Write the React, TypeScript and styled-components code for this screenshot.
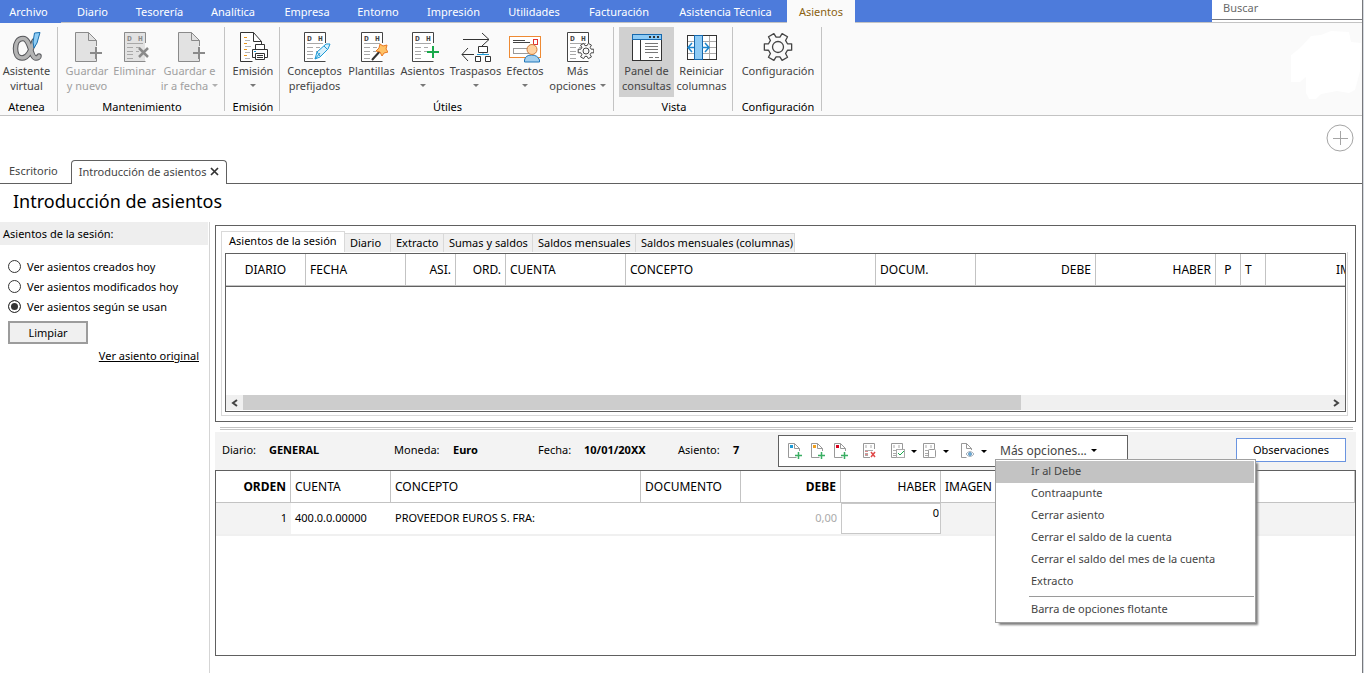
import React from "react";
import styled, { createGlobalStyle, css } from "styled-components";

const GlobalStyle = createGlobalStyle`
  * { box-sizing: border-box; }
  body {
    margin: 0;
    background: #fff;
    color: #000;
    font-family: "Noto Sans", "Open Sans", sans-serif;
    font-size: 11px;
    line-height: 15px;
  }
  button, input { font: inherit; color: inherit; }
  button { cursor: pointer; }
`;

const plainButton = css`
  border: 0;
  padding: 0;
  background: none;
`;

/* ---------- Window and top menu ---------- */

const Window = styled.div`
  display: flex;
  flex-direction: column;
  min-height: 100vh;
  margin-right: 1px;
  border-right: 1px solid #77787c;
  box-shadow: 1px 0 0 #d5dae0;
`;

const MenuBar = styled.nav`
  display: flex;
  height: 23px;
  background: #4d7bdb;
  border-bottom: 1px solid #c3c3c3;
`;

const MenuTab = styled.button<{ $width: number; $active?: boolean; $file?: boolean }>`
  ${plainButton}
  width: ${(p) => p.$width}px;
  height: 22px;
  flex: none;
  white-space: nowrap;
  color: #fff;
  ${(p) => p.$file && css`height: 23px; padding-right: 4px; background: #4d7bdb;`}
  ${(p) => p.$active && css`height: 23px; background: #fafafa; color: #8a6212;`}
`;

const Search = styled.label`
  width: 150px;
  margin-left: auto;
  background: #fff;
  input {
    display: block;
    width: 100%;
    height: 20px;
    padding: 0 11px 4px;
    border: 0;
    border-bottom: 1px solid #77787c;
    outline: 0;
    background: #fff;
  }
  input::placeholder { color: #6a6a6a; opacity: 1; }
`;

/* ---------- Ribbon ---------- */

const Ribbon = styled.section`
  display: flex;
  height: 93px;
  background: #fafafa;
  border-bottom: 1px solid #c3c3c3;
`;

const Group = styled.div`
  display: flex;
  flex-direction: column;
  align-items: center;
  justify-content: space-between;
  flex: none;
  height: 84px;
  margin-top: 4px;
  padding: 0 3px 0 5px;
  border-right: 1px solid #c3c3c3;
  &:first-child { padding: 0 4px 0 0; }
`;

const GroupTools = styled.div`
  display: flex;
`;

const GroupName = styled.div`
  line-height: 8px;
`;

const Tool = styled.button<{ $width: number; $pressed?: boolean }>`
  ${plainButton}
  display: flex;
  flex-direction: column;
  align-items: center;
  width: ${(p) => p.$width}px;
  height: 70px;
  padding-top: 4px;
  color: #444;
  white-space: nowrap;
  background: ${(p) => (p.$pressed ? "#d0d0d0" : "none")};
  &:disabled { color: #a0a0a0; cursor: default; }
  svg { flex: none; }
`;

const ToolLine = styled.span`
  display: flex;
  align-items: center;
  gap: 4px;
  height: 15px;
`;

const Caret = styled.i<{ $color?: string }>`
  border: 3px solid transparent;
  border-top-color: ${(p) => p.$color || "#777"};
  border-bottom: 0;
  button:disabled & { border-top-color: #b0b0b0; }
`;

const Cloud = styled.svg`
  margin: 8px 1px 0 auto;
`;

/* ---------- Document tabs ---------- */

const DocumentTabs = styled.div`
  display: flex;
  align-items: flex-end;
  height: 68px;
  border-bottom: 1px solid #606060;
`;

const DocumentTab = styled.button<{ $active?: boolean }>`
  ${plainButton}
  display: flex;
  align-items: center;
  gap: 4px;
  height: 24px;
  padding: 0 13px 1px 9px;
  color: #444;
  ${(p) =>
    p.$active &&
    css`
      margin-bottom: -1px;
      padding: 0 7px 2px;
      background: #fff;
      border: 1px solid #606060;
      border-bottom: 0;
      border-radius: 4px 4px 0 0;
    `}
`;

const AddButton = styled.button`
  ${plainButton}
  align-self: flex-start;
  height: 28px;
  margin: 8px 8px 0 auto;
`;

const Title = styled.h1`
  margin: 0;
  padding: 4px 13px 8px;
  font-size: 18px;
  font-weight: 400;
  line-height: 26px;
`;

/* ---------- Sidebar ---------- */

const Body = styled.div`
  display: flex;
  flex: 1;
`;

const Sidebar = styled.aside`
  flex: none;
  width: 210px;
  padding-right: 1px;
  border-right: 1px solid #d5d5d5;
`;

const SideHeading = styled.div`
  padding: 4px 3px;
  background: #eee;
`;

const Options = styled.div`
  display: flex;
  flex-direction: column;
  margin-top: 11px;
  padding-left: 8px;
`;

const Option = styled.label`
  display: flex;
  align-items: center;
  gap: 6px;
  height: 20px;
  input {
    appearance: none;
    width: 13px;
    height: 13px;
    margin: 0;
    border: 1px solid #333;
    border-radius: 50%;
    background: #fff;
  }
  input:checked {
    background: #333;
    box-shadow: inset 0 0 0 2px #fff;
  }
`;

const ClearButton = styled.button`
  display: block;
  width: 80px;
  height: 23px;
  margin: 5px 0 0 8px;
  padding: 0;
  border: 2px solid #9c9c9c;
  background: #f0f0f0;
`;

const OriginalLink = styled.a`
  display: block;
  margin: 4px 9px 0;
  text-align: right;
  color: #000;
`;

/* ---------- Session panel ---------- */

const Workspace = styled.main`
  flex: 1;
  min-width: 0;
  padding: 3px 6px 17px 5px;
`;

const SessionPanel = styled.section`
  padding: 5px 7px 5px 5px;
  border: 1px solid #606060;
`;

const SessionTabs = styled.div`
  display: flex;
  align-items: flex-end;
  height: 21px;
`;

const SessionTab = styled.button<{ $width: number; $active?: boolean }>`
  flex: none;
  width: ${(p) => p.$width}px;
  height: 19px;
  padding: 0 0 1px 5px;
  text-align: left;
  white-space: nowrap;
  border: 1px solid #d9d9d9;
  border-left: 0;
  border-bottom: 0;
  background: #f0f0f0;
  ${(p) =>
    p.$active &&
    css`
      height: 21px;
      padding: 0 0 4px 7px;
      border-left: 1px solid #d9d9d9;
      background: #fff;
    `}
`;

const SessionFrame = styled.div`
  padding: 1px 1px 3px 3px;
  border: 1px solid #d9d9d9;
  border-top: 0;
`;

const GridBox = styled.div`
  display: flex;
  flex-direction: column;
  height: 159px;
  overflow: hidden;
  border: 1px solid #606060;
`;

const Grid = styled.table`
  table-layout: fixed;
  border-collapse: separate;
  border-spacing: 0;
  width: 100%;
`;

const HeadCell = styled.th<{ $align?: string; $bold?: boolean; $indent?: number; $last?: boolean }>`
  height: 32px;
  padding: 0 4px;
  padding-left: ${(p) => p.$indent ?? 4}px;
  overflow: hidden;
  font-weight: ${(p) => (p.$bold ? 700 : 400)};
  font-size: 12px;
  text-align: ${(p) => p.$align || "left"};
  white-space: nowrap;
  border-right: ${(p) => (p.$last ? 0 : 1)}px solid #c3c3c3;
  border-bottom: 1px solid #c3c3c3;
`;

const GridRule = styled.div`
  flex: 1;
  border-top: 1px solid #606060;
`;

const ScrollBar = styled.div`
  display: flex;
  height: 16px;
  padding-bottom: 1px;
  background: #f0f0f0;
  background-clip: content-box;
`;

const ScrollArrow = styled.button`
  ${plainButton}
  display: flex;
  align-items: center;
  justify-content: center;
  width: 17px;
`;

const ScrollTrack = styled.div`
  flex: 1;
`;

const ScrollThumb = styled.div`
  width: calc(72% - 3px);
  height: 100%;
  background: #cdcdcd;
`;

const Splitter = styled.div`
  height: 3px;
  margin: 5px 3px 2px 5px;
  border: 1px solid #c3c3c3;
  border-width: 1px 0;
`;

/* ---------- Entry panel ---------- */

const EntryBar = styled.header`
  display: flex;
  align-items: center;
  height: 38px;
  padding: 0 10px 0 7px;
  background: #f3f3f3;
`;

const Field = styled.div<{ $width: number; $label: number }>`
  display: grid;
  grid-template-columns: ${(p) => p.$label}px auto;
  justify-content: start;
  flex: none;
  width: ${(p) => p.$width}px;
  padding-bottom: 4px;
  white-space: nowrap;
`;

const Toolbar = styled.div`
  display: flex;
  align-items: center;
  flex: none;
  width: 350px;
  height: 32px;
  padding-left: 8px;
  border: 1px solid #606060;
  background: #fff;
`;

const IconButton = styled.button<{ $width: number }>`
  ${plainButton}
  display: flex;
  align-items: center;
  gap: 5px;
  flex: none;
  width: ${(p) => p.$width}px;
`;

const MoreWrap = styled.div`
  position: relative;
`;

const MoreButton = styled.button`
  ${plainButton}
  display: flex;
  align-items: center;
  gap: 4px;
  padding: 0 0 2px 5px;
  color: #444;
  font-size: 12px;
`;

const Menu = styled.ul`
  position: absolute;
  z-index: 2;
  top: 16px;
  left: 0;
  width: 261px;
  margin: 0;
  padding: 1px 1px 1px 0;
  list-style: none;
  border: 1px solid #a0a0a0;
  background: #fff;
  box-shadow: 3px 3px 2px -1px #808080;
`;

const MenuItem = styled.button<{ $active?: boolean }>`
  ${plainButton}
  display: block;
  width: 100%;
  height: 22px;
  padding: 0 0 2px 35px;
  text-align: left;
  color: #444;
  white-space: nowrap;
  background: ${(p) => (p.$active ? "#c3c3c3" : "none")};
`;

const MenuRule = styled.li`
  margin: 3px 0 2px 33px;
  border-top: 1px solid #9a9a9a;
`;

const NotesButton = styled.button`
  width: 110px;
  height: 24px;
  margin: 0 0 2px auto;
  padding: 0 0 1px;
  border: 1px solid #6a94e0;
  background: #fff;
`;

const EntryGrid = styled.section`
  height: 186px;
  border: 1px solid #606060;
`;

const BodyCell = styled.td<{ $align?: string; $shaded?: boolean; $muted?: boolean }>`
  height: 33px;
  padding: 0 4px 2px;
  font-size: 11px;
  text-align: ${(p) => p.$align || "left"};
  white-space: nowrap;
  color: ${(p) => (p.$muted ? "#aaa" : "#000")};
  background: ${(p) => (p.$shaded ? "#f3f3f3" : "#fff")};
  border-bottom: 2px solid #f0f0f0;
`;

const EditCell = styled.td`
  height: 33px;
  padding: 0;
  border-bottom: 2px solid #f0f0f0;
  input {
    display: block;
    width: 100%;
    height: 31px;
    padding: 0 1px 12px;
    text-align: right;
    border: 1px solid #c8c8c8;
    border-radius: 0;
    outline: 0;
  }
`;

/* ---------- Icons ---------- */

const Icon = ({ children, w = 32, h = 32 }: { children: React.ReactNode; w?: number; h?: number }) => (
  <svg width={w} height={h} viewBox={`0 0 ${w} ${h}`} fill="none" stroke="#444" aria-hidden="true">
    {children}
  </svg>
);

const gearPath = (cx: number, cy: number, outer: number, inner: number) => {
  const points: string[] = [];
  for (let i = 0; i < 6; i++) {
    [[-19, inner], [-13, outer], [13, outer], [19, inner]].forEach(([offset, r]) => {
      const a = ((i * 60 + offset) * Math.PI) / 180;
      points.push(`${(cx + r * Math.cos(a)).toFixed(2)} ${(cy + r * Math.sin(a)).toFixed(2)}`);
    });
  }
  return `M${points.join("L")}Z`;
};

const AssistantIcon = () => (
  <Icon>
    <g strokeLinecap="round">
      <path d="M23 10C20 20 17 27 11 27 6.500 27 4.500 23 4.500 17.500S7 7.500 12 7.500C20 7.500 19 27 25 27 27 27 28 26 28 25" stroke="#55565a" strokeWidth="5.500" />
      <path d="M23 10C20 20 17 27 11 27 6.500 27 4.500 23 4.500 17.500S7 7.500 12 7.500C20 7.500 19 27 25 27 27 27 28 26 28 25" stroke="#b4b4b4" strokeWidth="3.500" />
    </g>
    <path d="M23.500 2L29 1.500 26 12l-3 5-1-6z" fill="#8fcdf5" stroke="#1a6fae" />
  </Icon>
);

const NewPageIcon = () => (
  <Icon>
    <path d="M4.500 1.500h13l8 8v21h-21z" fill="#e2e2e2" stroke="none" />
    <path d="M25.500 15V9.500l-8-8h-13v29h21V27M17.500 1.500v8h8" stroke="#8a8a8a" />
    <path d="M25 16v12M19 22h12" stroke="#8a8a8a" strokeWidth="2" />
  </Icon>
);

const Ledger = ({ muted, children }: { muted?: boolean; children: React.ReactNode }) => (
  <Icon>
    {muted && <path d="M5 1h21v30H5z" fill="#e2e2e2" stroke="none" />}
    <path d="M26.500 12V1.500h-21v29h21" fill={muted ? "none" : "#fff"} stroke={muted ? "#8a8a8a" : "#444"} />
    <g fill={muted ? "#8a8a8a" : "#444"} stroke="none" fontFamily="Liberation Mono, monospace" fontWeight="700" fontSize="8">
      <text x="8" y="10">D</text>
      <text x="19" y="10">H</text>
    </g>
    <path d="M8 12.500h16M8 16.500h6M8 20.500h6M8 23.500h6M8 27.500h6M17 16.500h4M17 20.500h3" stroke="#a8a8a8" />
    {children}
  </Icon>
);

const DeleteIcon = () => (
  <Ledger muted>
    <path d="M20 17l9 9M29 17l-9 9" stroke="#8a8a8a" strokeWidth="2.500" />
  </Ledger>
);

const PrintIcon = () => (
  <Icon>
    <path d="M24.500 13V10.500l-8-9h-13v29h12M16.500 1.500v9h8" fill="#fff" stroke="#333" />
    <path d="M7 6.500h3M7 12.500h3M7 18.500h3M7 24.500h3" stroke="#e8951c" />
    <path d="M8 9.500h5M8 15.500h6M8 21.500h5M8 27.500h5" stroke="#b5b5b5" />
    <path d="M18.500 18.500v-5h9v5M18.500 26.500h-3v-8h15v8h-3" fill="#fff" stroke="#333" />
    <path d="M18.500 22.500h9v6h-9zM20 24.500h6M20 26.500h6" fill="#fff" stroke="#333" />
    <path d="M17 20.500h2" stroke="#1c9ad6" />
  </Icon>
);

const PenIcon = () => (
  <Ledger>
    <path d="M16 28l2-7 9-8h4l-2 5-8 8zM18 21l3 4M25 15l3 3M16 28l5-6" fill="#d8f0fc" stroke="#1c9ad6" />
  </Ledger>
);

const WandIcon = () => (
  <Ledger>
    <path d="M16 29l9-10" stroke="#333" strokeWidth="2" />
    <path d="M24 13l3 2 4-1-1 4 2 3-4 1-2 3-2-4-4-1 3-3z" fill="#ffc266" stroke="#e97822" />
  </Ledger>
);

const AddEntryIcon = () => (
  <Ledger>
    <path d="M26 15v12M20 21h12" stroke="#19a94b" strokeWidth="2" />
  </Ledger>
);

const GearLedgerIcon = () => (
  <Ledger>
    <path d={gearPath(24, 20, 8, 5.5)} fill="#fafafa" />
    <circle cx="24" cy="20" r="3" />
  </Ledger>
);

const TransferIcon = () => (
  <Icon>
    <path d="M3 8.500h26M22 2l7 6.500-7 6.500M14 23.500H2M8 17l-6 6.500 6 6.500" stroke="#333" />
    <path d="M18.500 15.500h9v6h-9zM15.500 25.500h5v5h-5zM25.500 25.500h5v5h-5z" fill="#fff" stroke="#333" />
    <path d="M17 23.500h12M23 22v2" stroke="#1c9ad6" />
  </Icon>
);

const BillIcon = () => (
  <Icon>
    <rect x=".5" y="5.500" width="31" height="21" fill="#fff" stroke="#ee8a33" />
    <path d="M4 9.500h12M4 11.500h17" />
    <rect x="4.500" y="17.500" width="15" height="5" stroke="#999" />
    <rect x="24.500" y="8.500" width="4" height="5" stroke="#e23232" />
    <path d="M15.500 31v-2q1-5 7-5t8 5v2z" fill="#a5d0ef" stroke="#2177b8" />
    <circle cx="23" cy="18.500" r="5" fill="#ffd2a1" stroke="#cf7c3a" />
  </Icon>
);

const PanelIcon = () => (
  <Icon>
    <rect x="1.500" y="3.500" width="29" height="26" fill="#fff" stroke="#333" />
    <rect x="1.500" y="3.500" width="29" height="5" fill="#8ecbf5" stroke="#1668ad" />
    <path d="M18 6h2M22 6h2M26 6h2" stroke="#333" strokeWidth="2" />
    <path d="M9.500 9v20" stroke="#333" />
    <path d="M14 12.500h13M14 15.500h13M14 18.500h13M14 21.500h13M18 26.500h4M24 26.500h4" stroke="#777" />
  </Icon>
);

const ColumnsIcon = () => (
  <Icon>
    <rect x="1.500" y="4.500" width="29" height="24" fill="#fff" stroke="#333" />
    <path d="M2 10.500h28M2 16.500h28M2 22.500h28M23.500 5v23" stroke="#aaa" />
    <rect x="8.500" y="4.500" width="8" height="24" fill="#8ecbf5" stroke="#1668ad" />
    <path d="M8 16.500H2M6 12l-4 4.500L6 21M16 16.500h7M19 12l4 4.500-4 4.500" stroke="#1c85cc" strokeWidth="1.500" />
  </Icon>
);

const SettingsIcon = () => (
  <Icon>
    <path d={gearPath(16, 16, 14, 10)} strokeWidth="1.300" strokeLinejoin="round" />
    <circle cx="16" cy="16" r="5.500" strokeWidth="1.300" />
  </Icon>
);

const SmallNewIcon = ({ color }: { color: string }) => (
  <Icon w={16} h={18}>
    <path d="M12.500 9V6.500l-5-5h-6v14h8M7.500 1.500v5h5" stroke="#999" />
    <rect x="3" y="3" width="3" height="3" fill={color} stroke="none" />
    <path d="M11.500 10v7M8 13.500h7" stroke="#3aae63" strokeWidth="1.500" />
  </Icon>
);

const SmallLedgerIcon = ({ kind }: { kind: "delete" | "check" | "page" }) => (
  <Icon w={16} h={18}>
    <path d="M12.500 7V1.500h-11v14H8" stroke="#999" />
    <path d="M4 3v3M9 3v3M3 8.500h8M3 11.500h3M3 13.500h3" stroke="#aaa" />
    {kind === "delete" && (
      <>
        <path d="M3 9.500h3M3 12.500h3" stroke="#e08a8a" />
        <path d="M9 10l4 5M13 10l-4 5" stroke="#e04848" strokeWidth="1.500" />
      </>
    )}
    {kind === "check" && (
      <>
        <rect x="6.500" y="7.500" width="8" height="8" fill="#fff" stroke="#aaa" />
        <path d="M8 11l2 2 4-4" stroke="#19a94b" />
      </>
    )}
    {kind === "page" && <rect x="6.500" y="7.500" width="7" height="8" rx="1" fill="#fff" stroke="#999" />}
  </Icon>
);

const ViewIcon = () => (
  <Icon w={16} h={18}>
    <path d="M11.500 8V6.500l-5-5h-5v14h5M6.500 1.500v5h5" stroke="#999" />
    <path d="M6 12q4-5 8 0-4 5-8 0z" fill="#fff" stroke="#a5b0ba" />
    <circle cx="10" cy="12" r="1.500" fill="#6ab3e0" stroke="#6a9cc2" />
  </Icon>
);

/* ---------- Data ---------- */

const menuTabs: [string, number][] = [
  ["Diario", 63], ["Tesorería", 71], ["Analítica", 76], ["Empresa", 72], ["Entorno", 70],
  ["Impresión", 81], ["Utilidades", 80], ["Facturación", 90], ["Asistencia Técnica", 123],
];

type ToolData = {
  lines: string[];
  width: number;
  icon: React.ReactNode;
  disabled?: boolean;
  pressed?: boolean;
  caret?: "inline" | "below";
};

const groups: { name: string; tools: ToolData[] }[] = [
  { name: "Atenea", tools: [{ lines: ["Asistente", "virtual"], width: 53, icon: <AssistantIcon /> }] },
  {
    name: "Mantenimiento",
    tools: [
      { lines: ["Guardar", "y nuevo"], width: 48, icon: <NewPageIcon />, disabled: true },
      { lines: ["Eliminar"], width: 47, icon: <DeleteIcon />, disabled: true },
      { lines: ["Guardar e", "ir a fecha"], width: 63, icon: <NewPageIcon />, disabled: true, caret: "inline" },
    ],
  },
  { name: "Emisión", tools: [{ lines: ["Emisión"], width: 46, icon: <PrintIcon />, caret: "below" }] },
  {
    name: "Útiles",
    tools: [
      { lines: ["Conceptos", "prefijados"], width: 59, icon: <PenIcon /> },
      { lines: ["Plantillas"], width: 55, icon: <WandIcon /> },
      { lines: ["Asientos"], width: 47, icon: <AddEntryIcon />, caret: "below" },
      { lines: ["Traspasos"], width: 59, icon: <TransferIcon />, caret: "below" },
      { lines: ["Efectos"], width: 40, icon: <BillIcon />, caret: "below" },
      { lines: ["Más", "opciones"], width: 65, icon: <GearLedgerIcon />, caret: "inline" },
    ],
  },
  {
    name: "Vista",
    tools: [
      { lines: ["Panel de", "consultas"], width: 55, icon: <PanelIcon />, pressed: true },
      { lines: ["Reiniciar", "columnas"], width: 55, icon: <ColumnsIcon /> },
    ],
  },
  { name: "Configuración", tools: [{ lines: ["Configuración"], width: 80, icon: <SettingsIcon /> }] },
];

const sessionTabs: [string, number][] = [
  ["Diario", 46], ["Extracto", 53], ["Sumas y saldos", 89], ["Saldos mensuales", 103], ["Saldos mensuales (columnas)", 159],
];

const sessionColumns: [string, number, string?][] = [
  ["DIARIO", 80, "center"], ["FECHA", 100], ["ASI.", 50, "right"], ["ORD.", 50, "right"], ["CUENTA", 120],
  ["CONCEPTO", 250], ["DOCUM.", 100], ["DEBE", 120, "right"], ["HABER", 120, "right"], ["P", 25, "center"], ["T", 25],
];

const menuItems = [
  "Ir al Debe", "Contraapunte", "Cerrar asiento", "Cerrar el saldo de la cuenta",
  "Cerrar el saldo del mes de la cuenta", "Extracto",
];

const RibbonTool = ({ tool }: { tool: ToolData }) => (
  <Tool $width={tool.width} $pressed={tool.pressed} disabled={tool.disabled}>
    {tool.icon}
    {tool.lines.map((line, i) => (
      <ToolLine key={line}>
        {line}
        {tool.caret === "inline" && i === 1 && <Caret />}
      </ToolLine>
    ))}
    {tool.caret === "below" && <ToolLine><Caret /></ToolLine>}
  </Tool>
);

export default function App() {
  return (
    <>
      <GlobalStyle />
      <Window>
        <MenuBar>
          <MenuTab $width={61} $file>Archivo</MenuTab>
          {menuTabs.map(([name, width]) => (
            <MenuTab key={name} $width={width}>{name}</MenuTab>
          ))}
          <MenuTab $width={68} $active>Asientos</MenuTab>
          <Search>
            <input type="text" placeholder="Buscar" aria-label="Buscar" />
          </Search>
        </MenuBar>

        <Ribbon>
          {groups.map((group) => (
            <Group key={group.name}>
              <GroupTools>
                {group.tools.map((tool) => <RibbonTool key={tool.lines.join(" ")} tool={tool} />)}
              </GroupTools>
              <GroupName>{group.name}</GroupName>
            </Group>
          ))}
          <Cloud width="70" height="70" viewBox="0 0 70 70" aria-hidden="true">
            <path d="M0 24L9 17 20 5 30 4 40 0 58 1 60 11 70 12 69 40 64 59 58 62 46 60 30 63 25 68 18 68 15 62V46L9 51H0Z" fill="#fff" />
          </Cloud>
        </Ribbon>

        <DocumentTabs>
          <DocumentTab>Escritorio</DocumentTab>
          <DocumentTab $active>
            Introducción de asientos
            <svg width="9" height="9" viewBox="0 0 9 9" stroke="#333" strokeWidth="1.700" aria-hidden="true">
              <path d="M1 1l7 7M8 1L1 8" />
            </svg>
          </DocumentTab>
          <AddButton aria-label="Añadir">
            <svg width="28" height="28" viewBox="0 0 28 28" fill="none" stroke="#a5a5a5" aria-hidden="true">
              <circle cx="14" cy="14" r="13" />
              <path d="M14.500 7v14M7 14.500h15" />
            </svg>
          </AddButton>
        </DocumentTabs>

        <Title>Introducción de asientos</Title>

        <Body>
          <Sidebar>
            <SideHeading>Asientos de la sesión:</SideHeading>
            <Options>
              <Option><input type="radio" name="filtro" />Ver asientos creados hoy</Option>
              <Option><input type="radio" name="filtro" />Ver asientos modificados hoy</Option>
              <Option><input type="radio" name="filtro" defaultChecked />Ver asientos según se usan</Option>
            </Options>
            <ClearButton>Limpiar</ClearButton>
            <OriginalLink href="#original">Ver asiento original</OriginalLink>
          </Sidebar>

          <Workspace>
            <SessionPanel>
              <SessionTabs>
                <SessionTab $width={124} $active>Asientos de la sesión</SessionTab>
                {sessionTabs.map(([name, width]) => (
                  <SessionTab key={name} $width={width}>{name}</SessionTab>
                ))}
              </SessionTabs>
              <SessionFrame>
                <GridBox>
                  <Grid>
                    <colgroup>
                      {sessionColumns.map(([name, width]) => <col key={name} style={{ width }} />)}
                      <col />
                    </colgroup>
                    <thead>
                      <tr>
                        {sessionColumns.map(([name, , align]) => (
                          <HeadCell key={name} $align={align}>{name}</HeadCell>
                        ))}
                        <HeadCell $indent={70} $last>IMAGEN</HeadCell>
                      </tr>
                    </thead>
                  </Grid>
                  <GridRule />
                  <ScrollBar>
                    <ScrollArrow aria-label="Desplazar a la izquierda">
                      <svg width="7" height="8" viewBox="0 0 7 8" fill="none" stroke="#444" strokeWidth="2" aria-hidden="true"><path d="M6 1L2 4l4 3" /></svg>
                    </ScrollArrow>
                    <ScrollTrack><ScrollThumb /></ScrollTrack>
                    <ScrollArrow aria-label="Desplazar a la derecha">
                      <svg width="7" height="8" viewBox="0 0 7 8" fill="none" stroke="#444" strokeWidth="2" aria-hidden="true"><path d="M1 1l4 3-4 3" /></svg>
                    </ScrollArrow>
                  </ScrollBar>
                </GridBox>
              </SessionFrame>
            </SessionPanel>

            <Splitter />

            <EntryBar>
              <Field $width={172} $label={47}><span>Diario:</span><b>GENERAL</b></Field>
              <Field $width={144} $label={59}><span>Moneda:</span><b>Euro</b></Field>
              <Field $width={140} $label={46}><span>Fecha:</span><b>10/01/20XX</b></Field>
              <Field $width={100} $label={55}><span>Asiento:</span><b>7</b></Field>
              <Toolbar>
                <IconButton $width={23} aria-label="Nuevo asiento"><SmallNewIcon color="#1c9ad6" /></IconButton>
                <IconButton $width={23} aria-label="Insertar apunte"><SmallNewIcon color="#f0a020" /></IconButton>
                <IconButton $width={29} aria-label="Añadir apunte"><SmallNewIcon color="#d8001c" /></IconButton>
                <IconButton $width={28} aria-label="Eliminar apunte"><SmallLedgerIcon kind="delete" /></IconButton>
                <IconButton $width={32} aria-label="Validar"><SmallLedgerIcon kind="check" /><Caret $color="#000" /></IconButton>
                <IconButton $width={38} aria-label="Copiar"><SmallLedgerIcon kind="page" /><Caret $color="#000" /></IconButton>
                <IconButton $width={35} aria-label="Ver documento"><ViewIcon /><Caret $color="#000" /></IconButton>
                <MoreWrap>
                  <MoreButton aria-haspopup="menu" aria-expanded="true">Más opciones...<Caret $color="#000" /></MoreButton>
                  <Menu>
                    {menuItems.map((name, i) => (
                      <li key={name}><MenuItem $active={i === 0}>{name}</MenuItem></li>
                    ))}
                    <MenuRule />
                    <li><MenuItem>Barra de opciones flotante</MenuItem></li>
                  </Menu>
                </MoreWrap>
              </Toolbar>
              <NotesButton>Observaciones</NotesButton>
            </EntryBar>

            <EntryGrid>
              <Grid>
                <colgroup>
                  {[75, 100, 250, 100, 100, 100].map((width, i) => <col key={i} style={{ width }} />)}
                  <col />
                </colgroup>
                <thead>
                  <tr>
                    <HeadCell $align="right" $bold>ORDEN</HeadCell>
                    <HeadCell>CUENTA</HeadCell>
                    <HeadCell>CONCEPTO</HeadCell>
                    <HeadCell>DOCUMENTO</HeadCell>
                    <HeadCell $align="right" $bold>DEBE</HeadCell>
                    <HeadCell $align="right">HABER</HeadCell>
                    <HeadCell>IMAGEN</HeadCell>
                  </tr>
                </thead>
                <tbody>
                  <tr>
                    <BodyCell $align="right" $shaded>1</BodyCell>
                    <BodyCell>400.0.0.00000</BodyCell>
                    <BodyCell>PROVEEDOR EUROS S. FRA:</BodyCell>
                    <BodyCell />
                    <BodyCell $align="right" $muted>0,00</BodyCell>
                    <EditCell><input type="text" defaultValue="0" aria-label="Haber" /></EditCell>
                    <BodyCell $shaded />
                  </tr>
                </tbody>
              </Grid>
            </EntryGrid>
          </Workspace>
        </Body>
      </Window>
    </>
  );
}
